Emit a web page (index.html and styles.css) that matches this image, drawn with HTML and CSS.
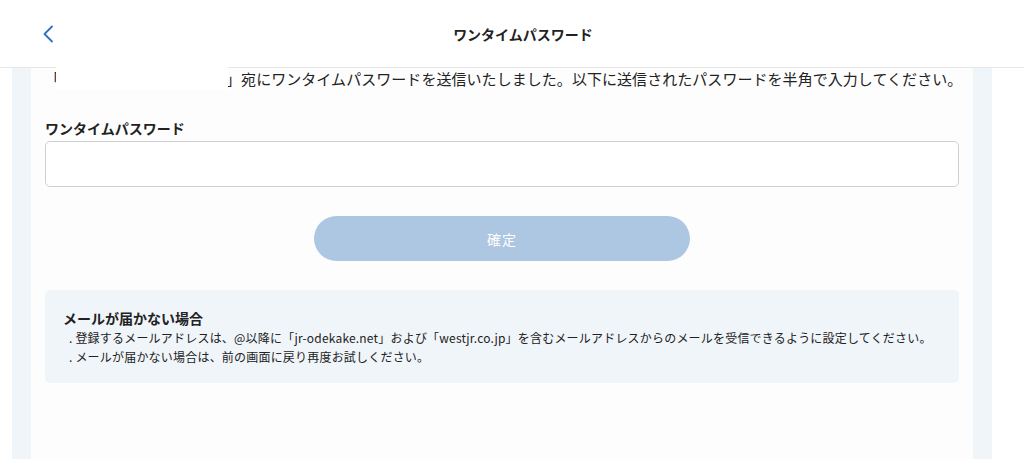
FILE: index.html
```html
<!DOCTYPE html>
<html lang="ja">
<head>
<meta charset="utf-8">
<title>ワンタイムパスワード</title>
<link rel="stylesheet" href="styles.css">
</head>
<body>
<header class="topbar">
  <a class="back" href="#" aria-label="戻る">
    <svg width="12" height="18" viewBox="0 0 12 18"><path d="M10 1.5 L2.5 9 L10 16.5" fill="none" stroke="#2f6fc4" stroke-width="1.8" stroke-linecap="round" stroke-linejoin="round"/></svg>
  </a>
  <h1 class="title">ワンタイムパスワード</h1>
  <span class="spacer"></span>
</header>
<div class="page">
  <main class="card">
    <p class="lead">「<span class="email"></span>」宛にワンタイムパスワードを送信いたしました。以下に送信されたパスワードを半角で入力してください。<span class="mask"></span></p>
    <label class="field-label" for="otp">ワンタイムパスワード</label>
    <input class="field" id="otp" type="text">
    <div class="actions">
      <button class="submit" type="button">確定</button>
    </div>
    <section class="notice">
      <h2 class="notice-title">メールが届かない場合</h2>
      <p class="notice-line">. 登録するメールアドレスは、@以降に「jr-odekake.net」および「westjr.co.jp」を含むメールアドレスからのメールを受信できるように設定してください。</p>
      <p class="notice-line">. メールが届かない場合は、前の画面に戻り再度お試しください。</p>
    </section>
  </main>
</div>
</body>
</html>
```
FILE: styles.css
```css
* { box-sizing: border-box; }
html, body { margin: 0; padding: 0; background: #fff; }
body {
  font-family: "Noto Sans CJK JP", "Noto Sans", sans-serif;
  color: #222;
  height: 459px;
  overflow: hidden;
}
.topbar {
  height: 68px;
  border-bottom: 1px solid #e6e6e6;
  display: grid;
  grid-template-columns: 1fr auto 1fr;
  align-items: center;
  background: #fff;
}
.back {
  display: flex;
  align-items: center;
  padding-left: 42px;
  padding-top: 1px;
}
.title {
  margin: 0;
  font-size: 14px;
  font-weight: 700;
  padding-left: 22px;
  line-height: 20px;
}
.page {
  margin-left: 12px;
  width: 980px;
  height: 391px;
  background: #f0f5fa;
  padding: 0 19px;
}
.card {
  background: #fdfdfd;
  height: 100%;
  padding: 0 14px;
}
.lead {
  margin: 0;
  position: relative;
  font-size: 15px;
  line-height: 22px;
  letter-spacing: 0.05px;
  white-space: nowrap;
}
.email { display: inline-block; width: 166px; }
.mask {
  position: absolute;
  left: 11px;
  top: -4px;
  width: 172px;
  height: 26px;
  background: #fff;
  z-index: 2;
}
.field-label {
  display: block;
  margin-top: 28px;
  font-size: 14px;
  font-weight: 700;
  line-height: 20px;
}
.field {
  display: block;
  width: 100%;
  height: 46px;
  margin-top: 3px;
  border: 1px solid #cfcfcf;
  border-radius: 5px;
  background: #fff;
}
.actions {
  display: flex;
  justify-content: center;
  padding-top: 29px;
}
.submit {
  width: 376px;
  height: 45px;
  border: none;
  border-radius: 23px;
  background: #adc6e2;
  color: #fff;
  font-family: inherit;
  font-size: 14px;
  letter-spacing: 1px;
  line-height: 20px;
}
.notice {
  margin-top: 29px;
  background: #f0f5fa;
  border-radius: 5px;
  padding: 18px 18px 17px;
  height: 93px;
}
.notice-title {
  margin: 0;
  font-size: 14px;
  font-weight: 700;
  line-height: 20px;
}
.notice-line {
  margin: 0;
  font-size: 12px;
  line-height: 19px;
  letter-spacing: 0.2px;
  padding-left: 6px;
}
```
